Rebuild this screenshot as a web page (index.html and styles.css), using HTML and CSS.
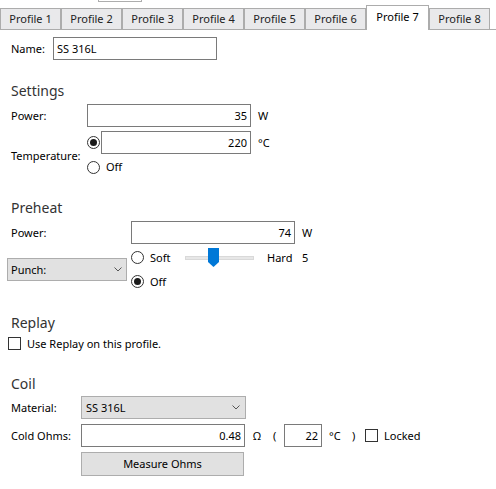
FILE: index.html
```html
<!DOCTYPE html>
<html>
<head>
<meta charset="utf-8" />
<title>Profiles</title>
<link rel="stylesheet" href="styles.css">
</head>
<body>
<div class="stub"></div>
<ul class="tabs">
    <li>Profile 1</li>
    <li>Profile 2</li>
    <li>Profile 3</li>
    <li>Profile 4</li>
    <li>Profile 5</li>
    <li>Profile 6</li>
    <li class="current">Profile 7</li>
    <li>Profile 8</li>
</ul>
<div class="page">
    <div class="name-row">
        <span class="label">Name:</span>
        <div class="box name">SS 316L</div>
    </div>

    <h2>Settings</h2>
    <div class="settings">
        <span class="label">Power:</span>
        <div class="box num wide">35</div>
        <span class="unit">W</span>

        <span class="label temp-label">Temperature:</span>
        <span class="radio checked"></span>
        <div class="box num">220</div>
        <span class="unit">°C</span>

        <span class="radio off"></span>
        <span class="off-text">Off</span>
    </div>

    <h2 class="preheat-head">Preheat</h2>
    <div class="preheat">
        <span class="label">Power:</span>
        <div class="power-row">
            <div class="box num">74</div>
            <span class="unit">W</span>
        </div>

        <div class="combo punch">
            <span>Punch:</span>
            <svg width="8" height="5" viewBox="0 0 8 5"><polyline points="0.5,0.5 4,4 7.5,0.5" fill="none" stroke="#555" stroke-width="1"/></svg>
        </div>
        <div class="choice soft">
            <span class="radio"></span>
            <span class="soft-text">Soft</span>
            <div class="slider">
                <div class="track"></div>
                <svg class="thumb" width="11" height="19" viewBox="0 0 11 19"><polygon points="0,0 11,0 11,14 5.5,19 0,14" fill="#0078d7"/></svg>
            </div>
            <span class="hard">Hard</span>
            <span>5</span>
        </div>
        <div class="choice">
            <span class="radio checked"></span>
            <span class="soft-text">Off</span>
        </div>
    </div>

    <h2 class="replay-head">Replay</h2>
    <div class="check-row">
        <span class="check"></span>
        <span>Use Replay on this profile.</span>
    </div>

    <h2 class="coil-head">Coil</h2>
    <div class="coil">
        <span class="label">Material:</span>
        <div class="combo material">
            <span>SS 316L</span>
            <svg width="8" height="5" viewBox="0 0 8 5"><polyline points="0.5,0.5 4,4 7.5,0.5" fill="none" stroke="#555" stroke-width="1"/></svg>
        </div>

        <span class="label">Cold Ohms:</span>
        <div class="ohms-row">
            <div class="box num wide">0.48</div>
            <span class="ohm">Ω</span>
            <span class="paren">(</span>
            <div class="box num small">22</div>
            <span class="deg">°C</span>
            <span class="paren-close">)</span>
            <span class="check"></span>
            <span>Locked</span>
        </div>

        <span></span>
        <div class="button">Measure Ohms</div>
    </div>
</div>
</body>
</html>
```

FILE: styles.css
```css
*{ padding:0; margin:0; list-style:none; box-sizing:border-box; }
body{
    width: 496px;
    height: 489px;
    background-color: #fff;
    font-family: "Noto Sans", "Open Sans", sans-serif;
    font-size: 11px;
    color: #000;
    overflow: hidden;
}

/* edge of the box sitting above the tabs */
.stub{
    width: 44px;
    height: 2px;
    margin-left: 98px;
    border: 1px solid #adadad;
    border-top: 0;
}

.tabs{
    display: flex;
    align-items: flex-end;
    height: 25px;
    margin-top: 3px;
    border-bottom: 1px solid #acacac;
}
.tabs li{
    width: 61px;
    height: 21px;
    line-height: 20px;
    text-align: center;
    color: #222;
    background: #e9e9eb;
    border: 1px solid #acacac;
    border-bottom: 0;
}
.tabs li.current{
    width: 63px;
    height: 25px;
    line-height: 21px;
    margin-bottom: -1px;
    background: #fff;
    color: #000;
}

.page{
    padding-left: 7px;
}

.label{
    padding-left: 4px;
    line-height: 23px;
}

.box{
    height: 23px;
    border: 1px solid #7a7a7a;
    background: #fff;
    line-height: 21px;
    padding: 0 3px;
    white-space: nowrap;
}
.box.num{ text-align: right; }

.name-row{
    display: flex;
    margin-top: 7px;
}
.name-row .label{ width: 46px; }
.name-row .name{ width: 164px; }

h2{
    font-size: 14px;
    font-weight: normal;
    line-height: 20px;
    color: #333;
    padding-left: 4px;
    margin-top: 21px;
    margin-bottom: 3px;
}

.unit{
    padding-left: 7px;
    line-height: 23px;
}

/* radio buttons and check boxes */
.radio{
    display: inline-block;
    width: 13px;
    height: 13px;
    border: 1px solid #333;
    border-radius: 50%;
    background: #fff;
    position: relative;
}
.radio.checked::after{
    content: "";
    position: absolute;
    left: 2px;
    top: 2px;
    width: 7px;
    height: 7px;
    border-radius: 50%;
    background: #1a1a1a;
}
.check{
    display: inline-block;
    width: 13px;
    height: 13px;
    border: 1px solid #333;
    background: #fff;
}

.settings{
    display: grid;
    grid-template-columns: 80px 14px 150px auto;
    align-items: start;
}
.settings .box{
    margin-bottom: 1px;
}
.settings .box.wide{
    grid-column: 2 / 4;
    margin-bottom: 4px;
}
.settings .temp-label{
    grid-row: 2 / 4;
    align-self: center;
}
.settings .radio.checked{
    margin-top: 5px;
}
.settings .radio.off{
    grid-column: 2;
    margin-top: 6px;
}
.settings .off-text{
    grid-column: 3;
    line-height: 24px;
    padding-left: 5px;
}

.preheat-head{
    margin-top: 19px;
}
.preheat{
    display: grid;
    grid-template-columns: 124px auto;
}
.power-row{
    display: flex;
    margin-bottom: 1px;
}
.power-row .box{ width: 164px; }

.combo{
    display: flex;
    align-items: center;
    justify-content: space-between;
    height: 23px;
    background: #e1e1e1;
    border: 1px solid #adadad;
}
.punch{
    grid-row: 2 / 4;
    align-self: center;
    width: 120px;
    padding: 0 4px 0 3px;
    margin-top: 1px;
}

.choice{
    display: flex;
    align-items: center;
    height: 24px;
}
.soft-text{
    padding-left: 6px;
}
.choice.soft .soft-text{
    width: 41px;
}

.slider{
    position: relative;
    width: 69px;
    height: 19px;
}
.track{
    margin-top: 8px;
    height: 4px;
    background: #e7e7e7;
    border: 1px solid #d9d9d9;
}
.thumb{
    position: absolute;
    left: 23px;
    top: 0;
}
.hard{
    padding-left: 13px;
    width: 48px;
}

.replay-head{
    margin-top: 20px;
    margin-bottom: 0;
}
.check-row{
    display: flex;
    align-items: center;
    height: 20px;
    padding-left: 1px;
}
.check-row .check{
    margin-right: 6px;
}

.coil-head{
    margin-top: 21px;
    margin-bottom: 2px;
}
.coil{
    display: grid;
    grid-template-columns: 74px auto;
    row-gap: 5px;
}
.material{
    width: 165px;
    padding: 0 5px 0 4px;
}
.ohms-row{
    display: flex;
    align-items: center;
}
.ohms-row .wide{ width: 164px; }
.ohms-row .small{ width: 38px; }
.ohm{ padding-left: 8px; width: 28px; }
.paren{ width: 11px; }
.deg{ padding-left: 7px; width: 30px; }
.paren-close{ width: 13px; }
.ohms-row .check{ margin-right: 6px; }

.button{
    width: 163px;
    height: 24px;
    line-height: 22px;
    text-align: center;
    background: #e1e1e1;
    border: 1px solid #adadad;
}
```
